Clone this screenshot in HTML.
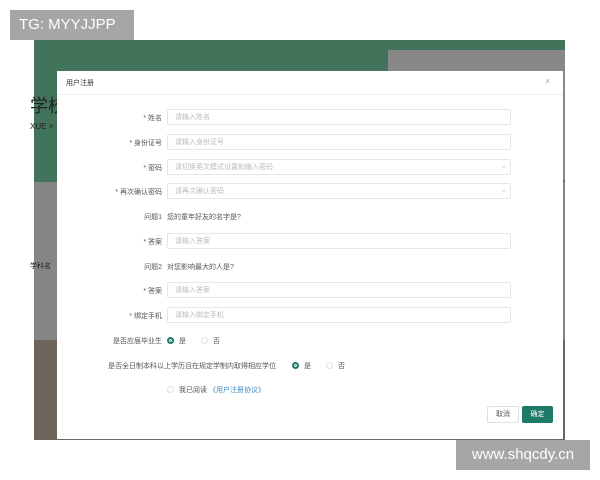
<!DOCTYPE html><html><head><meta charset="utf-8"><style>
body{margin:0;width:600px;height:480px;background:#fff;position:relative;overflow:hidden;font-family:"Liberation Sans","Noto Sans CJK SC",sans-serif}
.a{position:absolute}
.lb{position:absolute;right:438px;font-size:7px;color:#555;text-align:right;white-space:nowrap}
.in{position:absolute;left:167px;width:344px;height:16px;border:1px solid #e6e6e6;border-radius:2px;font-size:7px;color:#bbb;line-height:16px;padding-left:7px;box-sizing:border-box}
.t{position:absolute;font-size:7px;color:#555;white-space:nowrap}
.r{position:absolute;width:7px;height:7px;border-radius:50%;box-sizing:border-box}
.on{background:#1d7a66;border:2px solid #1d7a66;box-shadow:inset 0 0 0 1px #fff}
.off{border:1px solid #e0e0e0}
</style></head><body>
<div class="a" style="left:34px;top:40px;width:531px;height:142px;background:#41745b"></div>
<div class="a" style="left:34px;top:182px;width:531px;height:158px;background:#858585"></div>
<div class="a" style="left:34px;top:340px;width:531px;height:100px;background:#6e655a"></div>
<div class="a" style="left:388px;top:50px;width:177px;height:130px;background:#888"></div>
<div class="a" style="left:30px;top:92px;font-size:18px;color:#222">学校</div>
<div class="a" style="left:30px;top:122px;font-size:8px;color:#222">XUE &gt;</div>
<div class="a" style="left:30px;top:261px;font-size:7px;color:#222">学科名</div>
<div class="a" style="left:57px;top:71px;width:506px;height:368px;background:#fff"></div>
<div class="a" style="left:57px;top:94px;width:506px;height:1px;background:#eee"></div>
<div class="a" style="left:66px;top:78px;font-size:7px;color:#333">用户注册</div>
<div class="a" style="left:545px;top:76px;font-size:9px;color:#aaa">×</div>
<div class="lb" style="top:113px">* 姓名</div><div class="in" style="top:109px">请输入姓名</div>
<div class="lb" style="top:138px">* 身份证号</div><div class="in" style="top:134px">请输入身份证号</div>
<div class="lb" style="top:163px">* 密码</div><div class="in" style="top:159px">请切换英文模式设置和输入密码<span style="position:absolute;right:5px;color:#999">ᵕ</span></div>
<div class="lb" style="top:187px">* 再次确认密码</div><div class="in" style="top:183px">请再次确认密码<span style="position:absolute;right:5px;color:#999">ᵕ</span></div>
<div class="lb" style="top:212px">问题1</div><div class="t" style="left:167px;top:212px">您的童年好友的名字是?</div>
<div class="lb" style="top:237px">* 答案</div><div class="in" style="top:233px">请输入答案</div>
<div class="lb" style="top:262px">问题2</div><div class="t" style="left:167px;top:262px">对您影响最大的人是?</div>
<div class="lb" style="top:286px">* 答案</div><div class="in" style="top:282px">请输入答案</div>
<div class="lb" style="top:311px">* 绑定手机</div><div class="in" style="top:307px">请输入绑定手机</div>
<div class="lb" style="top:336px">是否应届毕业生</div>
<div class="r on" style="left:167px;top:337px"></div><div class="t" style="left:179px;top:336px">是</div>
<div class="r off" style="left:201px;top:337px"></div><div class="t" style="left:213px;top:336px">否</div>
<div class="t" style="left:108px;top:361px">是否全日制本科以上学历且在规定学制内取得相应学位</div>
<div class="r on" style="left:292px;top:362px"></div><div class="t" style="left:304px;top:361px">是</div>
<div class="r off" style="left:326px;top:362px"></div><div class="t" style="left:338px;top:361px">否</div>
<div class="a" style="left:167px;top:386px;width:7px;height:7px;border:1px solid #ddd;border-radius:50%;box-sizing:border-box"></div>
<div class="t" style="left:179px;top:385px">我已阅读 <span style="color:#3a8ec8">《用户注册协议》</span></div>
<div class="a" style="left:487px;top:406px;width:32px;height:17px;border:1px solid #e0e0e0;border-radius:2px;box-sizing:border-box;font-size:7px;color:#555;text-align:center;line-height:15px">取消</div>
<div class="a" style="left:522px;top:406px;width:31px;height:17px;background:#1d7a66;border-radius:2px;font-size:7px;color:#fff;text-align:center;line-height:17px">确定</div>
<div class="a" style="left:10px;top:10px;width:124px;height:30px;background:#a6a6a6;color:#fff;font-size:15px;line-height:30px;padding-left:9px;box-sizing:border-box">TG: MYYJJPP</div>
<div class="a" style="left:456px;top:440px;width:134px;height:30px;background:#a6a6a6;color:#fff;font-size:15px;line-height:30px;text-align:center">www.shqcdy.cn</div>
</body></html>
